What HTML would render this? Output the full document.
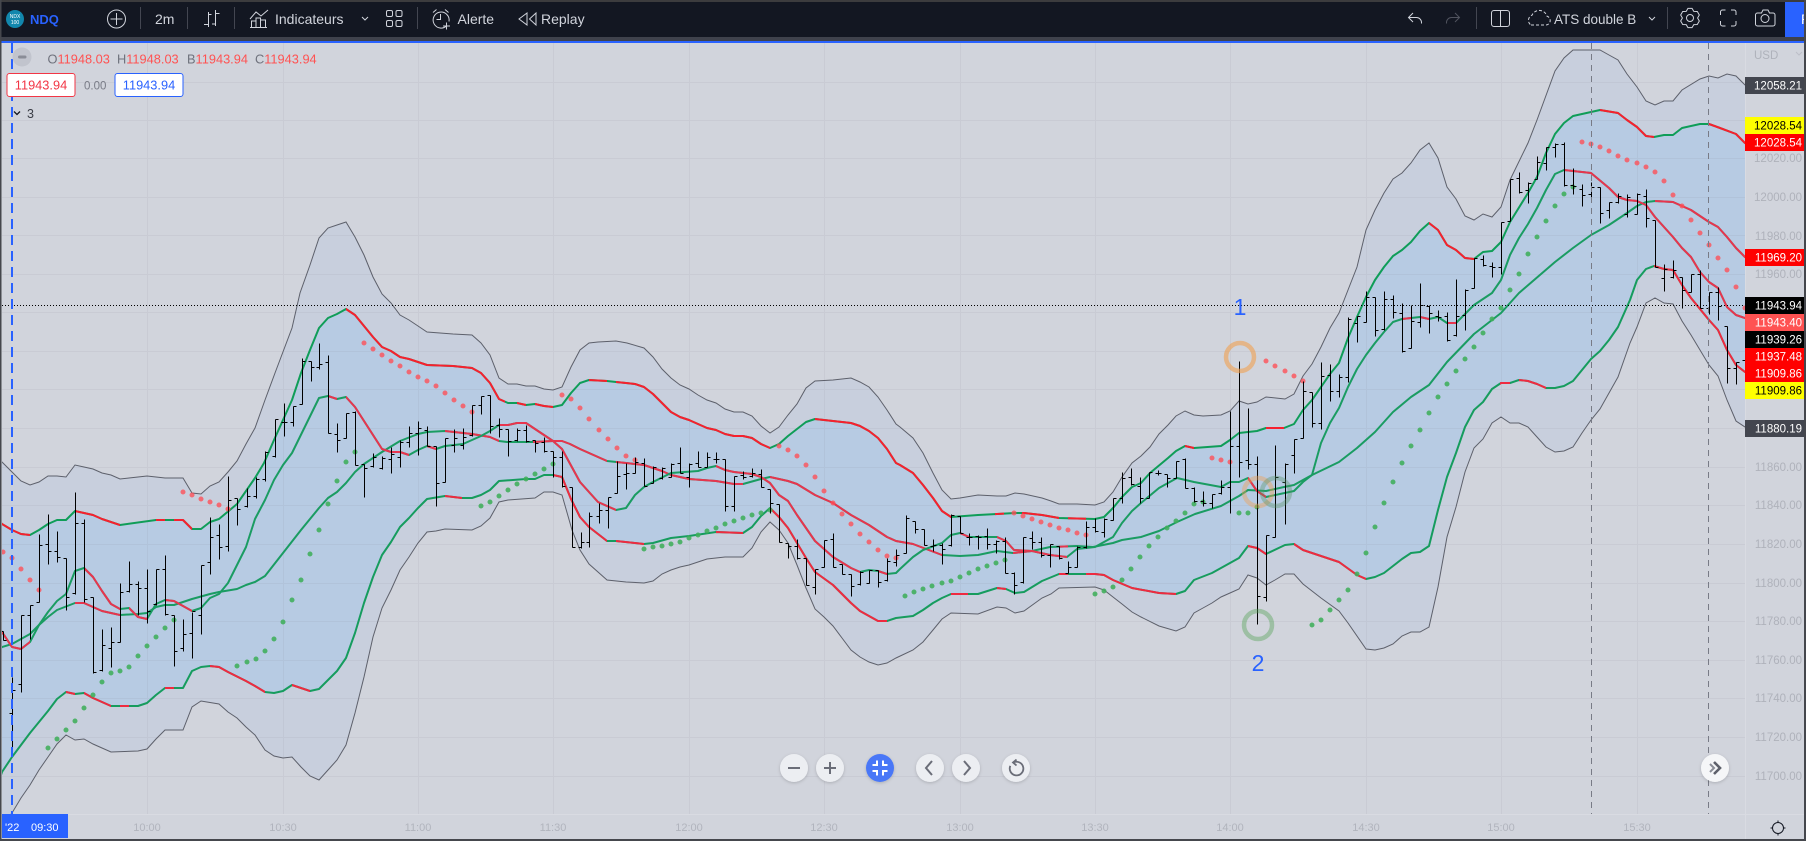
<!DOCTYPE html>
<html><head><meta charset="utf-8"><title>NDQ</title>
<style>
html,body{margin:0;padding:0;width:1806px;height:841px;overflow:hidden;background:#d1d4dc}
svg{display:block;font-family:"Liberation Sans",sans-serif}
.ax{font-size:11.5px;fill:#afb2bb}
.pl{font-size:11.5px;text-anchor:end;fill:#fff}
.tb{font-size:14px;fill:#d1d4dc}
.ic{fill:none;stroke:#d1d4dc;stroke-width:1}
.tm{font-size:11px;fill:#b1b4bd;text-anchor:middle}
.u{fill:none;stroke-width:2;stroke-linejoin:round}
</style></head><body>
<svg xmlns="http://www.w3.org/2000/svg" width="1806" height="841" viewBox="0 0 1806 841">
<defs>
<clipPath id="plot"><rect x="2" y="43" width="1743" height="771"/></clipPath>
<clipPath id="pub"><rect x="1785" y="2" width="19" height="35"/></clipPath>
<path id="g1" d="M0 462L2 462 12 472 21 481 30 485 39 482 48 476 57 476 66 477 75 465 84 467 93 469 102 473 111 475 120 479 129 478 138 477 147 476 156 477 165 478 183 478 192 493 201 494 210 486 219 482 228 472 237 461 246 444 255 428 265 400 275 373 292 328 300 293 310 265 319 238 328 228 337 225 346 222 355 237 364 255 373 277 382 294 391 303 400 315 409 320 418 326 427 332 453 334 472 335 481 343 490 355 499 378 508 384 517 384 526 386 535 386 544 389 553 390 562 387 571 367 580 350 589 343 598 342 616 341 627 343 644 348 653 357 662 369 671 378 680 385 689 389 698 395 707 400 716 403 725 409 734 412 743 412 752 416 761 426 770 433 779 427 788 415 797 404 806 388 815 381 833 380 851 378 860 382 869 387 878 397 887 410 896 424 900 427 913 438 923 453 933 473 942 490 951 499 960 498 978 495 997 496 1006 496 1015 493 1024 494 1042 498 1051 501 1059 504 1077 504 1095 505 1104 502 1113 492 1122 477 1132 463 1141 456 1150 447 1159 434 1168 425 1176 416 1185 411 1194 415 1203 416 1221 415 1230 411 1239 401 1248 404 1257 402 1266 397 1285 399 1294 394 1303 376 1312 364 1321 347 1330 328 1339 313 1348 290 1357 267 1366 230 1375 210 1384 193 1393 179 1402 173 1411 163 1420 150 1429 143 1438 158 1447 187 1456 199 1465 216 1474 220 1483 214 1492 217 1501 207 1510 180 1528 143 1537 120 1555 71 1564 58 1573 50 1600 50 1609 55 1618 60 1627 74 1637 87 1646 101 1655 105 1664 101 1673 101 1682 90 1700 79 1709 76 1718 78 1727 74 1736 76 1745 85 1750 88V838H0Z"/>
<path id="g2" d="M0 830L2 825 12 813 21 798 30 785 39 770 48 757 57 744 66 735 75 740 84 739 93 744 102 748 111 752 138 751 147 749 156 739 165 730 183 730 192 707 201 701 219 704 228 712 237 718 246 727 255 735 265 750 274 756 283 758 292 757 301 767 310 776 319 780 328 770 337 760 346 745 355 713 364 677 373 637 382 608 391 590 400 570 409 557 418 543 427 532 436 531 445 529 472 530 481 526 490 518 499 502 508 500 535 498 544 492 553 492 562 495 572 530 580 550 589 564 607 580 626 582 644 583 653 581 662 574 671 570 680 567 689 565 698 562 707 559 716 558 725 557 743 557 752 548 761 532 770 522 779 530 788 543 797 565 806 588 815 609 824 617 833 626 842 638 851 650 860 657 869 662 878 665 887 663 896 658 913 650 923 642 933 630 942 619 951 613 978 614 997 607 1006 608 1015 613 1024 611 1042 598 1051 594 1059 588 1095 587 1104 590 1113 597 1122 604 1132 612 1141 617 1159 626 1176 631 1185 627 1194 613 1203 608 1212 603 1221 597 1230 593 1239 589 1248 575 1257 578 1266 585 1275 580 1285 574 1294 574 1303 584 1312 591 1321 598 1339 611 1348 623 1366 649 1375 650 1384 648 1393 644 1402 636 1411 632 1420 632 1429 627 1438 587 1447 537 1456 507 1465 472 1474 448 1483 439 1492 423 1501 417 1510 423 1519 423 1528 427 1537 437 1546 447 1555 452 1564 451 1573 447 1582 433 1591 420 1600 409 1609 393 1618 377 1630 343 1637 327 1646 303 1655 298 1664 303 1673 304 1682 321 1691 335 1700 350 1709 365 1718 376 1727 400 1736 421 1745 427 1750 429V838H0Z"/>
<path id="bu" d="M0 522L2 524 12 530 21 534 30 535 39 530 48 524 57 520 66 520 75 511 93 515 102 519 120 525 156 520 183 520 192 529 201 529 210 522 219 519 237 504 255 478 264 463 274 440 283 420 292 400 301 373 310 350 319 328 328 318 337 314 346 309 355 315 364 326 373 337 382 347 391 351 400 357 409 359 418 362 427 365 453 366 472 368 481 373 490 383 499 399 508 403 517 403 526 405 535 404 544 406 553 407 562 405 571 393 580 383 589 380 607 381 616 382 626 383 635 384 644 387 653 394 662 403 671 412 680 417 689 420 698 424 707 428 716 430 725 434 734 436 743 436 752 438 761 444 770 448 779 444 788 436 797 429 806 422 815 419 833 421 851 423 860 426 869 431 878 438 887 449 896 463 900 465 913 473 923 485 933 498 942 511 951 517 978 515 997 514 1015 513 1024 513 1042 515 1059 518 1095 519 1104 517 1113 508 1122 497 1132 487 1141 483 1150 473 1168 458 1176 451 1185 446 1194 448 1221 446 1230 440 1239 433 1257 431 1266 428 1284 428 1294 424 1303 410 1312 400 1321 387 1330 374 1339 363 1348 338 1357 317 1366 297 1375 280 1384 267 1393 256 1402 250 1411 242 1420 231 1429 223 1438 230 1447 245 1456 250 1465 258 1474 259 1483 252 1492 251 1501 242 1510 222 1528 193 1537 177 1546 153 1555 134 1564 123 1573 116 1591 112 1600 110 1618 113 1627 120 1637 127 1646 136 1654 137 1664 135 1673 135 1682 128 1700 124 1709 124 1720 128 1736 134 1745 143 1750 146V838H0Z"/>
<path id="bl" d="M0 778L2 772 12 757 21 745 30 733 39 722 48 711 57 699 66 692 75 694 84 693 93 698 102 702 111 706 138 706 147 703 156 695 165 688 183 688 192 671 201 667 210 666 219 667 228 672 246 681 255 686 265 692 274 693 283 691 292 685 310 691 319 689 328 680 337 671 346 658 355 633 364 603 373 577 382 555 391 542 400 527 409 518 418 508 427 499 445 496 462 498 472 498 481 495 490 490 499 481 526 479 535 479 544 475 553 475 562 477 571 499 580 517 589 527 598 534 607 541 616 541 644 544 653 543 671 538 689 536 716 532 743 533 752 527 761 516 770 508 779 517 788 528 797 543 806 558 815 572 833 585 851 603 860 611 869 616 878 621 887 621 896 618 913 616 923 610 933 603 942 598 951 594 978 594 997 588 1006 589 1015 593 1024 592 1042 581 1059 574 1095 574 1104 575 1113 580 1132 588 1159 593 1176 594 1185 591 1194 580 1212 573 1221 568 1239 558 1248 546 1257 548 1266 554 1285 545 1294 544 1303 550 1339 562 1357 575 1366 579 1375 577 1384 573 1402 559 1411 553 1420 552 1429 546 1438 510 1447 477 1456 453 1465 427 1474 410 1483 402 1492 389 1501 383 1510 383 1519 380 1528 381 1537 384 1546 388 1555 388 1564 386 1573 381 1582 370 1591 359 1600 351 1609 340 1618 327 1630 300 1637 280 1646 269 1654 266 1664 269 1673 270 1682 285 1691 298 1700 309 1709 320 1718 330 1727 350 1736 365 1745 372 1750 374V838H0Z"/>
<path id="mid" d="M0 649L2 647 12 644 30 634 39 625 48 617 57 610 75 603 84 603 102 611 120 615 138 614 147 613 156 607 165 605 174 605 183 602 192 599 210 594 219 592 237 589 246 585 255 582 265 576 283 553 301 530 319 508 328 498 337 492 346 483 355 472 364 464 373 458 382 452 400 441 418 434 427 432 445 431 472 434 490 437 499 441 507 442 533 442 553 441 562 441 570 444 580 449 598 457 607 461 626 463 644 465 662 471 671 475 689 479 716 481 734 484 743 484 761 479 770 477 788 481 797 484 815 495 833 503 851 515 869 525 887 537 896 541 913 544 942 555 960 556 978 555 997 551 1013 553 1032 551 1050 547 1077 546 1093 547 1113 543 1122 540 1141 537 1159 531 1177 522 1195 514 1221 506 1239 496 1248 490 1266 491 1284 487 1294 485 1312 475 1339 462 1357 448 1375 432 1393 412 1411 397 1429 385 1447 362 1474 334 1501 313 1519 293 1555 262 1573 248 1591 235 1609 225 1627 213 1637 206 1646 202 1655 201 1673 202 1691 210 1709 222 1718 227 1727 237 1736 248 1745 257 1750 260V838H0Z"/>
<path id="fast" d="M0 630L2 632 12 647 21 649 30 642 39 625 48 612 57 601 66 594 75 571 84 568 93 577 102 591 111 604 120 609 129 608 138 617 147 619 156 604 165 600 174 601 183 606 192 611 201 608 210 598 219 594 228 583 237 565 246 547 255 519 265 500 274 480 283 465 292 453 319 398 328 396 337 399 346 397 355 407 382 449 391 452 400 452 409 455 418 450 427 446 436 449 445 446 463 444 472 440 481 436 490 431 499 425 508 425 517 423 526 423 535 429 553 441 562 449 580 482 598 502 616 510 626 508 635 495 644 487 653 482 671 473 698 471 707 468 716 466 725 470 734 472 752 474 761 477 770 483 779 495 788 501 797 515 815 541 833 557 851 568 860 572 869 570 878 571 887 574 896 573 900 569 913 557 923 550 942 543 951 535 960 533 969 537 997 537 1006 541 1014 550 1032 551 1050 555 1067 557 1077 549 1095 547 1113 537 1122 523 1132 511 1141 503 1159 488 1177 478 1194 482 1221 487 1230 482 1239 482 1248 478 1257 491 1266 497 1294 491 1303 482 1312 475 1321 443 1330 423 1339 408 1348 387 1357 369 1366 355 1375 343 1384 332 1393 322 1402 319 1420 317 1429 319 1438 317 1447 323 1456 323 1465 314 1474 305 1483 299 1492 293 1501 280 1510 255 1519 238 1528 224 1537 208 1546 190 1555 174 1564 170 1591 173 1609 188 1618 197 1627 200 1637 201 1646 205 1655 217 1673 237 1682 248 1691 257 1700 272 1709 282 1718 288 1727 307 1736 315 1745 318 1750 320V838H0Z"/>
<clipPath id="ru"><rect x="2" width="28" height="841"/><rect x="75" width="45" height="841"/><rect x="156" width="9" height="841"/><rect x="174" width="18" height="841"/><rect x="346" width="159" height="841"/><rect x="517" width="9" height="841"/><rect x="535" width="18" height="841"/><rect x="589" width="18" height="841"/><rect x="616" width="154" height="841"/><rect x="815" width="136" height="841"/><rect x="995" width="9" height="841"/><rect x="1022" width="37" height="841"/><rect x="1068" width="18" height="841"/><rect x="1185" width="9" height="841"/><rect x="1266" width="18" height="841"/><rect x="1429" width="45" height="841"/><rect x="1600" width="54" height="841"/><rect x="1709" width="40" height="841"/></clipPath>
<clipPath id="rm"><rect x="75" width="45" height="841"/><rect x="445" width="54" height="841"/><rect x="533" width="74" height="841"/><rect x="616" width="127" height="841"/><rect x="770" width="172" height="841"/><rect x="1013" width="19" height="841"/><rect x="1059" width="9" height="841"/><rect x="1655" width="95" height="841"/></clipPath>
<clipPath id="rf"><rect x="2" width="28" height="841"/><rect x="84" width="36" height="841"/><rect x="129" width="18" height="841"/><rect x="165" width="27" height="841"/><rect x="328" width="9" height="841"/><rect x="346" width="63" height="841"/><rect x="427" width="9" height="841"/><rect x="499" width="117" height="841"/><rect x="716" width="144" height="841"/><rect x="878" width="9" height="841"/><rect x="960" width="9" height="841"/><rect x="997" width="70" height="841"/><rect x="1248" width="18" height="841"/><rect x="1402" width="9" height="841"/><rect x="1420" width="9" height="841"/><rect x="1447" width="9" height="841"/><rect x="1564" width="186" height="841"/></clipPath>
<clipPath id="rl"><rect x="66" width="9" height="841"/><rect x="84" width="27" height="841"/><rect x="120" width="9" height="841"/><rect x="165" width="9" height="841"/><rect x="210" width="55" height="841"/><rect x="292" width="18" height="841"/><rect x="445" width="17" height="841"/><rect x="553" width="54" height="841"/><rect x="616" width="28" height="841"/><rect x="716" width="27" height="841"/><rect x="770" width="117" height="841"/><rect x="951" width="17" height="841"/><rect x="997" width="9" height="841"/><rect x="1059" width="9" height="841"/><rect x="1086" width="90" height="841"/><rect x="1248" width="18" height="841"/><rect x="1294" width="72" height="841"/><rect x="1500" width="10" height="841"/><rect x="1519" width="27" height="841"/><rect x="1654" width="96" height="841"/></clipPath>
<filter id="sh" x="-30%" y="-30%" width="160%" height="170%"><feDropShadow dx="0" dy="1" stdDeviation="1.6" flood-color="#000" flood-opacity=".18"/></filter>
</defs>

<rect width="1806" height="841" fill="#d1d4dc"/>

<!-- plot -->
<g clip-path="url(#plot)">
<use href="#g1" fill="#c8cfdd"/>
<use href="#g2" fill="#d1d4dc"/>
<use href="#bu" fill="#b7cbe3"/>
<use href="#bl" fill="#c8cfdd"/>
<use href="#g2" fill="#d1d4dc"/>

<path fill="none" stroke="#787b86" stroke-opacity=".09" d="M0 82.5H1745M0 120.5H1745M0 158.5H1745M0 197.5H1745M0 235.5H1745M0 274.5H1745M0 312.5H1745M0 351.5H1745M0 389.5H1745M0 428.5H1745M0 467.5H1745M0 505.5H1745M0 544.5H1745M0 583.5H1745M0 621.5H1745M0 660.5H1745M0 698.5H1745M0 737.5H1745M0 776.5H1745M147.5 43V814M283.5 43V814M418.5 43V814M553.5 43V814M689.5 43V814M824.5 43V814M960.5 43V814M1095.5 43V814M1230.5 43V814M1366.5 43V814M1501.5 43V814M1637.5 43V814"/>

<use href="#g1" fill="none" stroke="#5d606b" stroke-width="1"/>
<use href="#g2" fill="none" stroke="#5d606b" stroke-width="1"/>

<use href="#mid" class="u" stroke="#1a9c62"/>
<g clip-path="url(#rm)"><use href="#mid" class="u" stroke="#e8344e"/></g>
<use href="#fast" class="u" stroke="#1a9c62"/>
<g clip-path="url(#rf)"><use href="#fast" class="u" stroke="#e8344e"/></g>
<use href="#bu" class="u" stroke="#0f9d58"/>
<g clip-path="url(#ru)"><use href="#bu" class="u" stroke="#f7202e"/></g>
<use href="#bl" class="u" stroke="#169c5e"/>
<g clip-path="url(#rl)"><use href="#bl" class="u" stroke="#ef2a40"/></g>

<path fill="none" stroke="#ff4d55" stroke-opacity=".78" stroke-width="5" stroke-linecap="round" d="M3 552h.01M12 558h.01M21 569h.01M30 580h.01M39 590h.01M183 492h.01M192 495h.01M201 499h.01M210 502h.01M219 505h.01M228 509h.01M364 343h.01M373 349h.01M382 355h.01M391 361h.01M400 366h.01M409 372h.01M418 377h.01M427 381h.01M436 386h.01M445 393h.01M454 400h.01M463 406h.01M472 412h.01M562 395h.01M571 399h.01M580 408h.01M589 419h.01M599 430h.01M608 439h.01M617 448h.01M626 456h.01M635 460h.01M779 446h.01M788 450h.01M797 456h.01M806 465h.01M815 477h.01M824 491h.01M833 503h.01M842 514h.01M851 524h.01M860 534h.01M869 542h.01M878 550h.01M887 556h.01M896 558h.01M1014 513h.01M1023 516h.01M1032 519h.01M1041 522h.01M1050 525h.01M1059 528h.01M1068 530h.01M1077 533h.01M1086 535h.01M1212 458h.01M1221 460h.01M1230 462h.01M1266 361h.01M1275 366h.01M1285 371h.01M1294 376h.01M1303 381h.01M1582 142h.01M1591 144h.01M1600 147h.01M1609 151h.01M1618 156h.01M1627 160h.01M1637 163h.01M1646 167h.01M1655 172h.01M1664 181h.01M1673 195h.01M1682 206h.01M1691 220h.01M1700 233h.01M1709 245h.01M1718 258h.01M1727 270h.01M1736 287h.01M1745 308h.01"/>
<path fill="none" stroke="#3fae5a" stroke-opacity=".88" stroke-width="5" stroke-linecap="round" d="M48 748h.01M57 739h.01M66 730h.01M75 721h.01M84 708h.01M93 695h.01M102 682h.01M111 673h.01M120 671h.01M129 667h.01M138 656h.01M147 646h.01M156 637h.01M165 628h.01M174 620h.01M237 666h.01M247 662h.01M256 659h.01M265 651h.01M274 639h.01M283 622h.01M292 600h.01M301 580h.01M310 554h.01M319 530h.01M328 504h.01M337 481h.01M346 462h.01M355 452h.01M481 506h.01M490 502h.01M499 496h.01M508 490h.01M517 484h.01M526 479h.01M535 474h.01M544 469h.01M553 464h.01M644 549h.01M653 547h.01M662 546h.01M671 544h.01M680 542h.01M689 538h.01M698 535h.01M707 531h.01M716 528h.01M725 524h.01M734 521h.01M743 518h.01M752 515h.01M761 513h.01M770 510h.01M905 596h.01M914 592h.01M923 589h.01M932 586h.01M942 583h.01M951 581h.01M960 577h.01M969 573h.01M978 569h.01M987 566h.01M996 563h.01M1005 560h.01M1095 594h.01M1104 591h.01M1113 587h.01M1122 580h.01M1131 569h.01M1140 557h.01M1149 546h.01M1158 537h.01M1167 528h.01M1176 521h.01M1185 513h.01M1194 504h.01M1203 502h.01M1239 513h.01M1248 513h.01M1257 507h.01M1312 625h.01M1321 620h.01M1330 610h.01M1339 600h.01M1348 590h.01M1357 574h.01M1366 553h.01M1375 527h.01M1384 503h.01M1393 482h.01M1402 463h.01M1411 446h.01M1420 430h.01M1429 413h.01M1438 397h.01M1447 384h.01M1456 371h.01M1465 359h.01M1474 347h.01M1483 333h.01M1492 319h.01M1501 308h.01M1510 290h.01M1519 274h.01M1528 254h.01M1537 237h.01M1546 221h.01M1555 206h.01M1564 194h.01M1573 187h.01"/>

<!-- price bars -->
<g transform="translate(.5 .5)" shape-rendering="crispEdges">
<path fill="none" stroke="#000" stroke-width="1" d="M3 631V640M0 631h3M3 640h3M12 677V747M9 713h3M12 690h3M21 615V692M18 684h3M21 615h3M30 605V639M27 615h3M30 605h3M39 534V602M36 602h3M39 545h3M48 514V564M45 544h3M48 551h3M57 531V562M54 551h3M57 557h3M66 558V610M63 558h3M66 597h3M75 492V594M72 593h3M75 523h3M84 519V602M81 523h3M84 599h3M93 597V673M90 597h3M93 672h3M102 629V671M99 670h3M102 645h3M111 627V667M108 648h3M111 642h3M120 583V642M117 642h3M120 592h3M129 561V592M126 591h3M129 584h3M138 581V615M135 584h3M138 588h3M147 569V623M144 588h3M147 611h3M156 569V605M153 604h3M156 569h3M165 555V615M162 569h3M165 614h3M174 615V666M171 615h3M174 651h3M183 619V651M180 648h3M183 634h3M192 612V658M189 633h3M192 611h3M201 565V634M198 615h3M201 565h3M210 517V574M207 562h3M210 537h3M219 524V559M216 535h3M219 547h3M228 476V551M225 546h3M228 500h3M237 498V525M234 498h3M237 509h3M247 488V507M244 506h3M247 496h3M256 477V498M253 496h3M256 479h3M265 451V481M262 479h3M265 452h3M275 419V457M272 456h3M275 419h3M284 403V436M281 422h3M284 422h3M293 406V426M290 422h3M293 406h3M302 358V404M299 404h3M302 361h3M311 361V381M308 361h3M311 367h3M319 343V369M316 367h3M319 364h3M328 355V433M325 362h3M328 433h3M337 423V452M334 434h3M337 440h3M346 413V438M343 438h3M346 413h3M355 411V465M352 412h3M355 465h3M364 464V497M361 464h3M364 468h3M373 453V467M370 466h3M373 457h3M382 456V469M379 468h3M382 458h3M391 447V473M388 459h3M391 454h3M400 440V467M397 457h3M400 442h3M409 426V447M406 442h3M409 433h3M418 421V455M415 433h3M418 428h3M427 426V446M424 430h3M427 446h3M436 446V506M433 446h3M436 483h3M445 438V482M442 482h3M445 438h3M454 429V452M451 445h3M454 438h3M463 428V449M460 445h3M463 437h3M472 405V436M469 435h3M472 405h3M481 396V414M478 405h3M481 396h3M490 395V433M487 395h3M490 426h3M499 418V437M496 425h3M499 429h3M508 429V456M505 429h3M508 441h3M517 428V441M514 440h3M517 430h3M526 425V442M523 430h3M526 441h3M535 440V452M532 440h3M535 443h3M544 437V452M541 442h3M544 451h3M553 451V477M550 451h3M553 457h3M562 451V487M559 457h3M562 486h3M572 487V547M569 487h3M572 547h3M581 532V548M578 547h3M581 542h3M589 512V547M586 542h3M589 516h3M599 503V523M596 516h3M599 510h3M608 497V528M605 510h3M608 497h3M617 461V493M614 493h3M617 476h3M626 463V489M623 474h3M626 473h3M635 457V473M632 473h3M635 462h3M644 458V486M641 463h3M644 486h3M653 466V483M650 483h3M653 467h3M662 467V479M659 478h3M662 468h3M671 463V477M668 477h3M671 464h3M680 447V473M677 463h3M680 473h3M689 463V487M686 477h3M689 464h3M698 451V467M695 463h3M698 467h3M707 452V467M704 467h3M707 457h3M716 452V463M713 459h3M716 459h3M725 459V511M722 459h3M725 506h3M734 476V511M731 506h3M734 476h3M743 471V479M740 475h3M743 477h3M752 468V477M749 476h3M752 473h3M761 469V487M758 474h3M761 487h3M770 489V513M767 489h3M770 503h3M779 504V542M776 504h3M779 542h3M788 543V558M785 543h3M788 546h3M797 539V559M794 546h3M797 558h3M806 558V585M803 558h3M806 585h3M815 569V594M812 587h3M815 569h3M824 540V567M821 567h3M824 540h3M833 533V567M830 539h3M833 567h3M842 564V574M839 564h3M842 574h3M851 574V596M848 574h3M851 586h3M860 571V585M857 584h3M860 572h3M869 570V583M866 583h3M869 570h3M878 570V587M875 570h3M878 582h3M887 558V581M884 580h3M887 561h3M896 549V566M893 562h3M896 555h3M906 515V553M903 553h3M906 518h3M915 521V533M912 521h3M915 529h3M924 529V545M921 529h3M924 545h3M933 539V551M930 546h3M933 545h3M942 543V564M939 545h3M942 549h3M951 514V546M948 545h3M951 515h3M960 516V533M957 516h3M960 533h3M969 533V545M966 537h3M969 537h3M978 535V549M975 536h3M978 537h3M987 528V549M984 536h3M987 544h3M996 540V553M993 544h3M996 541h3M1005 537V573M1002 541h3M1005 573h3M1014 572V594M1011 573h3M1014 585h3M1023 537V583M1020 582h3M1023 537h3M1032 531V549M1029 538h3M1032 542h3M1041 537V557M1038 542h3M1041 555h3M1050 544V567M1047 555h3M1050 544h3M1059 546V559M1056 546h3M1059 558h3M1068 561V573M1065 573h3M1068 567h3M1077 546V567M1074 567h3M1077 547h3M1086 521V548M1083 547h3M1086 527h3M1095 518V532M1092 527h3M1095 531h3M1104 518V537M1101 532h3M1104 519h3M1113 498V520M1110 520h3M1113 498h3M1122 472V503M1119 498h3M1122 478h3M1131 468V485M1128 477h3M1131 484h3M1140 477V503M1137 486h3M1140 498h3M1149 472V498M1146 498h3M1149 472h3M1158 470V475M1155 473h3M1158 473h3M1167 474V487M1164 474h3M1167 478h3M1176 461V478M1173 478h3M1176 461h3M1185 458V488M1182 459h3M1185 488h3M1194 487V502M1191 488h3M1194 501h3M1203 491V506M1200 501h3M1203 503h3M1212 494V508M1209 503h3M1212 494h3M1221 480V494M1218 493h3M1221 487h3M1230 411V513M1227 487h3M1230 446h3M1239 361V477M1236 446h3M1239 462h3M1248 408V469M1245 460h3M1248 464h3M1257 456V624M1254 464h3M1257 596h3M1266 535V601M1263 597h3M1266 535h3M1275 445V537M1272 537h3M1275 477h3M1285 463V524M1282 482h3M1285 464h3M1294 439V473M1291 455h3M1294 439h3M1303 381V438M1300 438h3M1303 391h3M1312 392V427M1309 392h3M1312 423h3M1321 362V429M1318 423h3M1321 376h3M1330 364V401M1327 375h3M1330 391h3M1339 374V397M1336 391h3M1339 377h3M1348 317V382M1345 377h3M1348 319h3M1357 316V342M1354 323h3M1357 316h3M1366 291V322M1363 322h3M1366 297h3M1375 297V336M1372 297h3M1375 330h3M1384 291V330M1381 329h3M1384 299h3M1393 295V318M1390 299h3M1393 312h3M1402 303V352M1399 313h3M1402 351h3M1411 305V348M1408 348h3M1411 321h3M1420 283V327M1417 322h3M1420 305h3M1429 305V333M1426 306h3M1429 313h3M1438 310V321M1435 316h3M1438 317h3M1447 312V341M1444 316h3M1447 340h3M1456 279V336M1453 335h3M1456 316h3M1465 289V330M1462 315h3M1465 290h3M1474 258V288M1471 288h3M1474 258h3M1483 255V266M1480 259h3M1483 265h3M1492 262V277M1489 266h3M1492 267h3M1501 222V274M1498 267h3M1501 222h3M1510 179V221M1507 221h3M1510 179h3M1519 172V193M1516 178h3M1519 192h3M1528 182V203M1525 190h3M1528 183h3M1537 156V179M1534 179h3M1537 162h3M1546 147V170M1543 163h3M1546 147h3M1555 143V157M1552 147h3M1555 144h3M1564 142V186M1561 144h3M1564 185h3M1573 168V194M1570 185h3M1573 186h3M1582 184V206M1579 189h3M1582 195h3M1591 182V202M1588 194h3M1591 187h3M1600 187V223M1597 187h3M1600 213h3M1609 202V218M1606 210h3M1609 202h3M1618 193V203M1615 202h3M1618 196h3M1627 194V217M1624 214h3M1627 197h3M1637 193V214M1634 214h3M1637 194h3M1646 189V227M1643 196h3M1646 218h3M1655 220V267M1652 220h3M1655 267h3M1664 264V291M1661 278h3M1664 269h3M1673 260V278M1670 277h3M1673 270h3M1682 277V308M1679 277h3M1682 290h3M1691 274V292M1688 292h3M1691 274h3M1700 270V308M1697 274h3M1700 308h3M1709 292V314M1706 308h3M1709 292h3M1718 287V320M1715 292h3M1718 306h3M1727 326V383M1724 326h3M1727 368h3M1736 362V384M1733 368h3M1736 362h3M1742 360h3"/>
</g>

<!-- drawings -->
<circle cx="1240" cy="357" r="14" fill="none" stroke="#f0a050" stroke-opacity=".6" stroke-width="4.5"/>
<circle cx="1258" cy="492" r="14" fill="none" stroke="#f0a050" stroke-opacity=".42" stroke-width="4.5"/>
<circle cx="1276" cy="492" r="14" fill="none" stroke="#4f8f60" stroke-opacity=".36" stroke-width="4.5"/>
<circle cx="1258" cy="625" r="14" fill="none" stroke="#4f9f50" stroke-opacity=".4" stroke-width="4.5"/>

<path d="M2 305.5H1745" stroke="#000" stroke-width="1" stroke-dasharray="1 2" fill="none"/>
<path d="M1591.5 43V814M1708.5 43V814" stroke="#787b86" stroke-width="1" stroke-dasharray="6 5" fill="none"/>
<path d="M12 43V814" stroke="#2962ff" stroke-width="2" stroke-dasharray="10 6" fill="none"/>
</g>

<text x="1240" y="315" font-size="23" fill="#2962ff" text-anchor="middle">1</text>
<text x="1258" y="671" font-size="23" fill="#2962ff" text-anchor="middle">2</text>

<!-- axes -->
<path d="M1745.5 43V839M0 814.5H1804" stroke="#d9dbe2" stroke-width="1" fill="none"/>

<text class="ax" x="1754" y="59">USD</text>
<path d="M1796 52l3 3 3-3" fill="none" stroke="#bcbfc8" stroke-width="1"/>
<g class="ax" text-anchor="end">
<text x="1802" y="162">12020.00</text><text x="1802" y="201">12000.00</text><text x="1802" y="240">11980.00</text><text x="1802" y="278">11960.00</text>
<text x="1802" y="471">11860.00</text><text x="1802" y="509">11840.00</text><text x="1802" y="548">11820.00</text><text x="1802" y="587">11800.00</text><text x="1802" y="625">11780.00</text><text x="1802" y="664">11760.00</text><text x="1802" y="702">11740.00</text><text x="1802" y="741">11720.00</text><text x="1802" y="780">11700.00</text>
</g>

<rect x="1745" y="77" width="59" height="17" fill="#43464f"/><text class="pl" x="1802" y="89.5">12058.21</text>
<rect x="1745" y="117" width="59" height="17" fill="#ffff00"/><text class="pl" x="1802" y="129.5" style="fill:#000">12028.54</text>
<rect x="1745" y="134" width="59" height="17" fill="#ff0000"/><text class="pl" x="1802" y="146.5">12028.54</text>
<rect x="1745" y="249" width="59" height="17" fill="#ff0000"/><text class="pl" x="1802" y="261.5">11969.20</text>
<rect x="1745" y="297" width="59" height="17" fill="#000"/><text class="pl" x="1802" y="309.5">11943.94</text>
<rect x="1745" y="314" width="59" height="17" fill="#ff5252"/><text class="pl" x="1802" y="326.5">11943.40</text>
<rect x="1745" y="331" width="59" height="17" fill="#000"/><text class="pl" x="1802" y="343.5">11939.26</text>
<rect x="1745" y="348" width="59" height="17" fill="#ff0000"/><text class="pl" x="1802" y="360.5">11937.48</text>
<rect x="1745" y="365" width="59" height="17" fill="#ff0000"/><text class="pl" x="1802" y="377.5">11909.86</text>
<rect x="1745" y="382" width="59" height="17" fill="#ffff00"/><text class="pl" x="1802" y="394.5" style="fill:#000">11909.86</text>
<rect x="1745" y="420" width="59" height="17" fill="#43464f"/><text class="pl" x="1802" y="432.5">11880.19</text>

<rect x="2" y="814" width="66" height="24" fill="#2962ff"/>
<text x="5" y="831" font-size="11" fill="#fff">'22</text>
<text x="31" y="831" font-size="11" fill="#fff">09:30</text>
<text class="tm" x="147" y="831">10:00</text><text class="tm" x="283" y="831">10:30</text><text class="tm" x="418" y="831">11:00</text><text class="tm" x="553" y="831">11:30</text><text class="tm" x="689" y="831">12:00</text><text class="tm" x="824" y="831">12:30</text><text class="tm" x="960" y="831">13:00</text><text class="tm" x="1095" y="831">13:30</text><text class="tm" x="1230" y="831">14:00</text><text class="tm" x="1366" y="831">14:30</text><text class="tm" x="1501" y="831">15:00</text><text class="tm" x="1637" y="831">15:30</text>

<!-- axis gear -->
<g fill="none" stroke="#131722" stroke-width="1"><circle cx="1778" cy="828" r="5.5"/><path d="M1778 820.5v2M1778 833.5v2M1770.5 828h2M1783.5 828h2"/></g>

<!-- legend -->
<circle cx="22" cy="57" r="9.5" fill="#c1c4cd"/><rect x="18" y="55.5" width="8.5" height="3" rx="1.5" fill="#8a8d97"/>
<text y="63.5" font-size="12.8" fill="#ff5252"><tspan x="47.5" fill="#6f727d">O</tspan>11948.03<tspan x="117" fill="#6f727d">H</tspan><tspan>11948.03</tspan><tspan x="187" fill="#6f727d">B</tspan><tspan>11943.94</tspan><tspan x="255" fill="#6f727d">C</tspan><tspan>11943.94</tspan></text>
<rect x="7" y="73.5" width="68" height="23" rx="2.5" fill="#fff" stroke="#f23645"/>
<text x="41" y="89.5" font-size="12.8" fill="#f23645" text-anchor="middle">11943.94</text>
<text x="84" y="89.5" font-size="11.5" fill="#787b86">0.00</text>
<rect x="115" y="73.5" width="68" height="23" rx="2.5" fill="#fff" stroke="#2962ff"/>
<text x="149" y="89.5" font-size="12.8" fill="#2962ff" text-anchor="middle">11943.94</text>
<path d="M14 111.5l3 3 3-3" fill="none" stroke="#131722" stroke-width="1.3"/>
<text x="27" y="118" font-size="12.5" fill="#3a3d46">3</text>

<!-- nav buttons -->
<g filter="url(#sh)"><circle cx="794" cy="768" r="14" fill="#eceef2"/><circle cx="830" cy="768" r="14" fill="#eceef2"/><circle cx="880" cy="768" r="14" fill="#4a77f7"/><circle cx="930" cy="768" r="14" fill="#eceef2"/><circle cx="966" cy="768" r="14" fill="#eceef2"/><circle cx="1016" cy="768" r="14" fill="#eceef2"/><circle cx="1715" cy="768" r="14" fill="#f5f6f8"/></g>
<g fill="none" stroke="#6a6d78" stroke-width="2">
<path d="M788 768H800M824 768H836M830 762V774M932 761l-6 7 6 7M964 761l6 7-6 7"/>
<path d="M1013.5 762.5a6.8 6.8 0 1 1-3.2 3.4M1016.5 759.5l-3.5 3 3.5 3" stroke-width="1.8"/>
<path d="M872.5 765H877V760.5M887.5 765H883V760.5M872.5 771H877V775.5M887.5 771H883V775.5" stroke="#fff"/>
<path d="M1710 764l4 4-4 4" stroke="#8a8d97"/><path d="M1714 762l6 6-6 6" stroke="#5d606b" stroke-width="2.6"/>
</g>

<!-- toolbar -->
<rect width="1806" height="37" fill="#131722"/>
<rect width="1806" height="2" fill="#3c3c3e"/>
<rect y="37" width="1806" height="4" fill="#3f424c"/>
<rect y="41" width="1806" height="2" fill="#2962ff"/>
<rect x="0" y="0" width="1.5" height="841" fill="#45474d"/>
<rect x="0" y="839" width="1806" height="2" fill="#45474d"/>
<rect x="1785" y="2" width="19" height="35" fill="#2962ff"/>
<text x="1801" y="24" font-size="14" fill="#fff" clip-path="url(#pub)">P</text>
<rect x="1804" y="0" width="2" height="841" fill="#45474d"/>

<circle cx="15" cy="19" r="9" fill="#1287ad"/>
<text x="15" y="18" font-size="5" fill="#fff" text-anchor="middle">NDX</text>
<text x="15" y="24" font-size="5" fill="#fff" text-anchor="middle">100</text>
<text x="30" y="24" font-size="13" font-weight="bold" fill="#2962ff">NDQ</text>

<g class="ic">
<circle cx="116.5" cy="19" r="9"/><path d="M116.5 13v12M110.5 19h12"/>
<path d="M140.5 7V29M187.5 7V29M234.5 7V29M417.5 7V29M1476.5 7V29M1667.5 7V29" stroke="#434651"/>
<path d="M208.5 12v15M204 24.5h4.5M208.5 14.5h3M215.5 10v16M215.5 13.5h4M212 24h3.5"/>
<path d="M250 19l6-7 5 4 7-6M251.5 27v-6h4.5v6M256 27v-9h4.5v9M260.5 27v-7h5v7M250 27.5h17"/>
<path d="M362 17l3 3 3-3"/>
<rect x="386.5" y="10.5" width="6" height="6" rx="1.5"/><rect x="396" y="10.5" width="6" height="6" rx="1.5"/><rect x="386.5" y="20.5" width="6" height="6" rx="1.5"/><rect x="396" y="20.5" width="6" height="6" rx="1.5"/>
<path d="M447 25.5a8 8 0 1 1 2-4M440.5 14v5.5h-4M446.5 22.5v7M443 26h7M433 12.5l3.5-3M448.5 12.5l-3.5-3"/>
<path d="M527 13l-8 6 8 6zM536 13l-6.5 6 6.5 6z"/>
<path d="M1413 13l-4.5 4.5 4.5 4.5M1408.5 17.5h8a5 5 0 0 1 5 5v1"/>
<path d="M1455 13l4.5 4.5-4.5 4.5M1459.5 17.5h-8a5 5 0 0 0-5 5v1" stroke="#50535e"/>
<rect x="1491.5" y="10.5" width="18" height="16" rx="2.5"/><path d="M1500.5 10.5v16"/>
<path d="M1531 25h15a4.5 4.5 0 0 0 1-8.8a8 8 0 0 0-15-1a5.5 5.5 0 0 0-1 9.8z" stroke-dasharray="3 2"/>
<path d="M1649 17l3 3 3-3"/>
<path transform="translate(1690 18)" d="M-2.04-9.59L2.04-9.59 3.8-6.58 7.28-6.56 9.32-3.03 7.6 0 9.32 3.03 7.28 6.56 3.8 6.58 2.04 9.59-2.04 9.59-3.8 6.58-7.28 6.56-9.32 3.03-7.6 0-9.32-3.03-7.28-6.56-3.8-6.58Z"/>
<circle cx="1690" cy="18" r="3.5"/>
<path d="M1720.5 15v-3a2 2 0 0 1 2-2h3M1731 10h3a2 2 0 0 1 2 2v3M1736 21v3a2 2 0 0 1-2 2h-3M1725.5 26h-3a2 2 0 0 1-2-2v-3"/>
<path d="M1757.5 13h4l1.5-3h5l1.5 3h3.500a2 2 0 0 1 2 2v9a2 2 0 0 1-2 2h-15.500a2 2 0 0 1-2-2v-9a2 2 0 0 1 2-2z"/>
<circle cx="1765" cy="18.5" r="4"/>
</g>
<text class="tb" x="155" y="24">2m</text>
<text class="tb" x="275" y="24">Indicateurs</text>
<text class="tb" x="457.5" y="24">Alerte</text>
<text class="tb" x="541" y="24">Replay</text>
<text class="tb" x="1554" y="24" style="font-size:13.5px">ATS double B</text>
</svg>
</body></html>
